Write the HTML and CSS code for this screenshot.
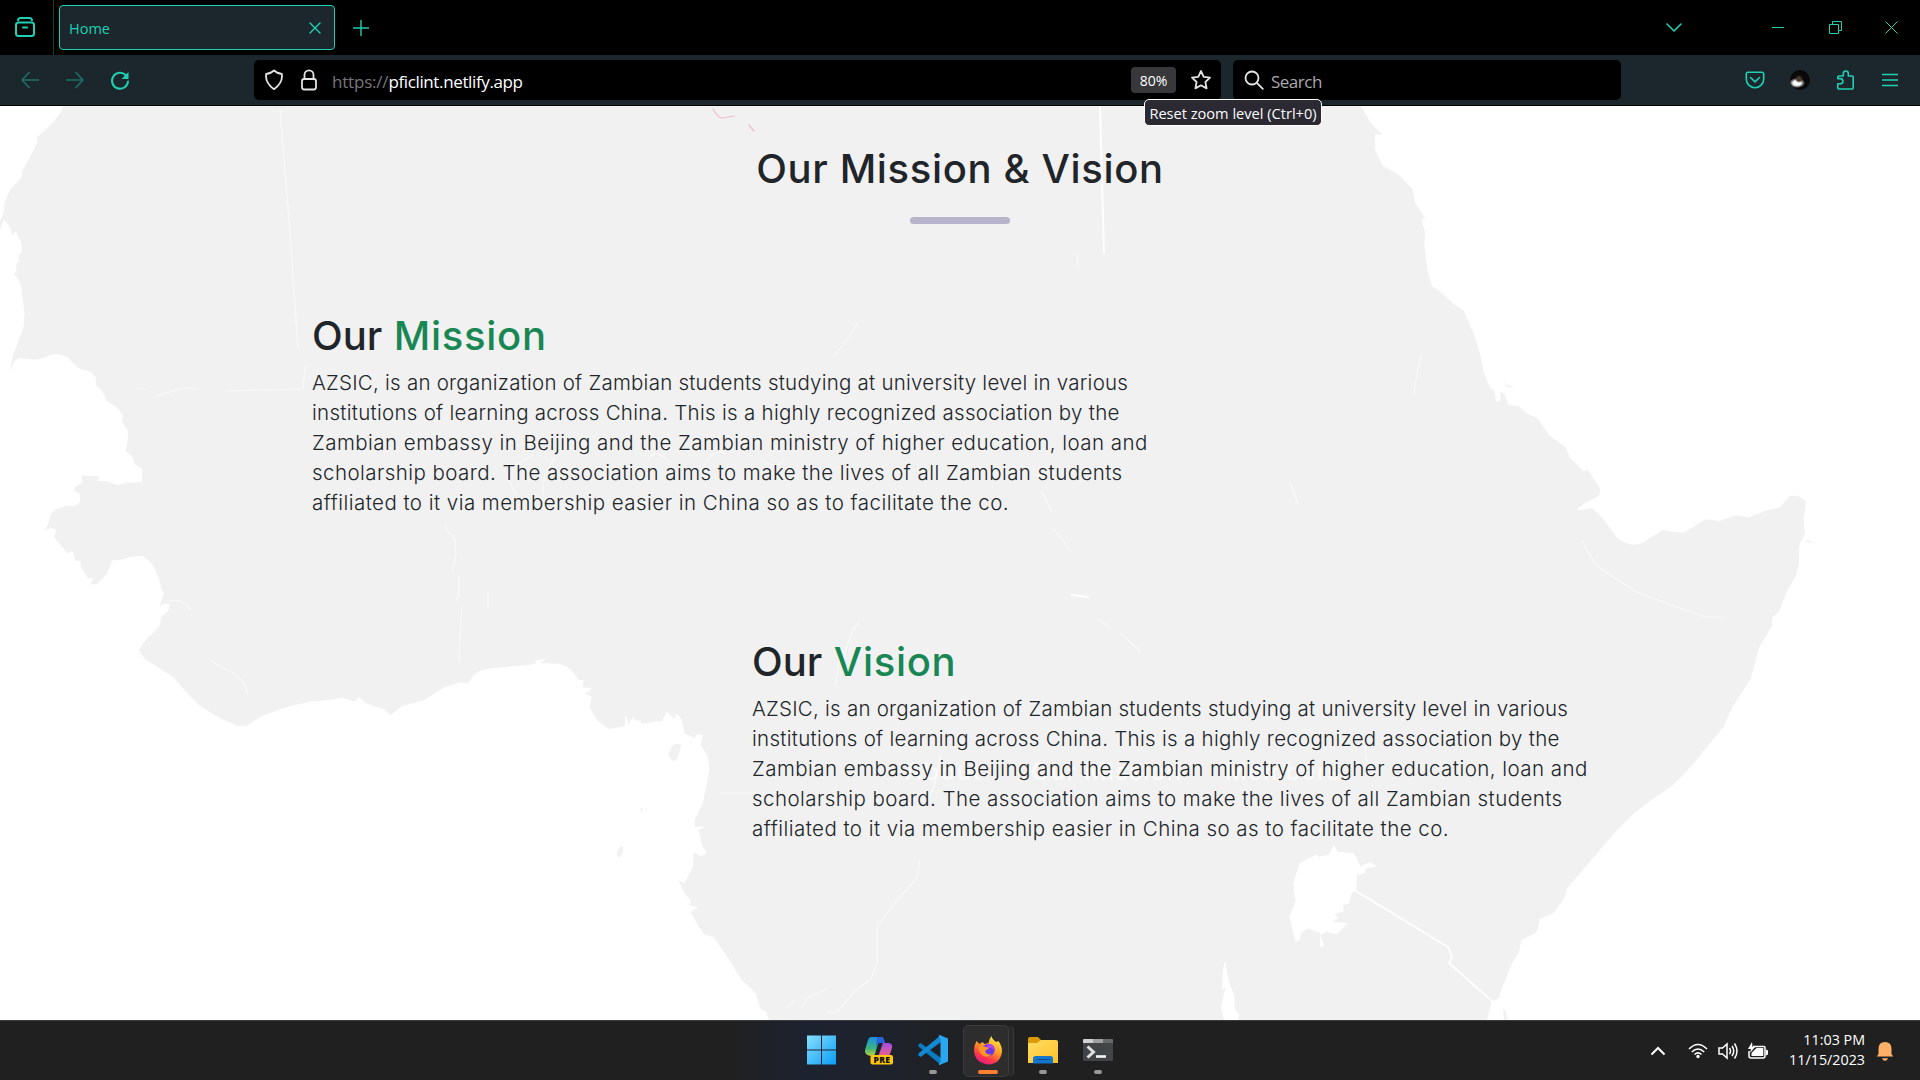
FILE: index.html
```html
<!DOCTYPE html>
<html lang="en">
<head>
<meta charset="utf-8">
<title>Home</title>
<link rel="stylesheet" href="styles.css">
</head>
<body>
<div class="screen">
  <header class="tabs">
    <div class="view"><svg width="20" height="20" viewBox="0 0 20 20"><path d="M3 3.2Q3.400 1 5.600 1h8.800Q16.600 1 17 3.200" /><rect x="1" y="5.500" width="18" height="13.500" rx="2.500"/><path d="M8 10.500h4"/></svg></div>
    <div class="tab"><span class="t-home">Home</span><svg width="12" height="12" viewBox="0 0 12 12"><path d="M1 1l10 10M11 1L1 11"/></svg></div>
    <svg class="plus" width="16" height="16" viewBox="0 0 16 16"><path d="M8 .5v15M.5 8h15"/></svg>
    <div class="window">
      <svg width="18" height="12" viewBox="0 0 18 12"><path d="M2 2l7 7 7-7"/></svg>
      <svg class="thin w1" width="13" height="13" viewBox="0 0 13 13"><path d="M0 6.500h12"/></svg>
      <svg class="thin w2" width="13" height="13" viewBox="0 0 13 13"><path d="M.5 3.500h9v9h-9zM3.500 3.500v-3h9v9h-3"/></svg>
      <svg class="thin w3" width="13" height="13" viewBox="0 0 13 13"><path d="M.5.5l12 12M12.500.5l-12 12"/></svg>
    </div>
  </header>
  <nav class="toolbar">
    <div class="nav">
      <svg class="dim" width="18" height="18" viewBox="0 0 18 18"><path d="M17.500 9H1M8 1.500L1 9l7 7.500"/></svg>
      <svg class="dim" width="18" height="18" viewBox="0 0 18 18"><path d="M.5 9H17M10 1.500L17 9l-7 7.500"/></svg>
      <svg class="reload" width="20" height="20" viewBox="0 0 20 20"><path d="M15.800 4.200A8 8 0 1 0 18 10.500"/><path class="fill" d="M18.500 1v7h-7z"/></svg>
    </div>
    <div class="url">
      <svg width="20" height="22" viewBox="0 0 20 22"><path d="M10 1.500Q12.500 4 17.800 5Q19.200 13.500 10 20.200Q.8 13.500 2.200 5Q7.500 4 10 1.500Z"/></svg>
      <svg class="lock" width="18" height="22" viewBox="0 0 18 22"><rect x="2" y="10" width="14" height="10.500" rx="2.200"/><path d="M4.500 10V5.800a4.500 4.500 0 0 1 9 0V10"/></svg>
      <span class="t-url"><span class="scheme">https://</span><span class="host">pficlint.netlify.app</span></span>
      <span class="chip">80%</span>
      <svg class="star" width="22" height="22" viewBox="0 0 22 22"><path d="M11 2l2.700 5.800 6.300.8-4.600 4.400 1.200 6.400L11 16.300l-5.600 3.100L6.600 13 2 8.600l6.300-.8z"/></svg>
    </div>
    <div class="search">
      <svg width="20" height="20" viewBox="0 0 20 20"><circle cx="8" cy="8" r="6.500"/><path d="M12.800 12.800l6 6"/></svg>
      <span class="t-search">Search</span>
    </div>
    <div class="tools">
      <svg width="20" height="18" viewBox="0 0 20 18"><path d="M3 1.200h14a1.700 1.700 0 0 1 1.700 1.700V8a8.700 8.700 0 0 1-17.400 0V2.900A1.700 1.700 0 0 1 3 1.200zM5.500 6.500L10 10.800l4.500-4.300"/></svg>
      <span class="orb"></span>
      <svg width="20" height="22" viewBox="0 0 20 22"><path d="M2.500 20Q1.800 20 1.800 19v-4.200h2.500a2.600 2.600 0 0 0 0-5.200H1.800V8Q1.800 7 2.800 7h4.500V4.500a2.500 2.500 0 0 1 5 0V7h3.900Q17.200 7 17.200 8v11Q17.200 20 16.200 20z"/></svg>
      <svg width="16" height="16" viewBox="0 0 16 16"><path d="M.5 2.500h15M.5 8h15M.5 13.500h15"/></svg>
    </div>
  </nav>
  <div class="tip">Reset zoom level (Ctrl+0)</div>

  <main class="page">
    <svg class="map" viewBox="0 106 1920 914" width="1920" height="914">
      <rect class="land" x="0" y="106" width="1920" height="914"/>
      <g class="sea">
        <path transform="translate(0 100) scale(.40816)" d="M-10 0L158 0 150 28 130 55 90 92 92 102 68 150 55 172 52 192 25 218 12 250 8 278-2 300-2 322 10 292 25 312 30 332 38 322 52 348 54 372 46 380 46 396 40 400 40 420 34 425 50 448 56 490 60 520 58 555 45 590 30 630 25 665Q35 635 48 632L80 636Q95 636 105 632L125 624Q145 620 165 630L185 650Q195 661 205 661L222 665 235 680 235 698 250 712 262 738 285 752 300 770 300 788 312 808 314 828 308 862 322 870 330 892 348 905 348 936 310 938 288 944 262 934 240 933 243 922 200 920 202 938 184 948 182 958 196 965 196 985 185 994 160 995 132 1005 122 1020 118 1040 108 1055 125 1048 138 1052 132 1072 142 1082 165 1110 178 1106 185 1128 198 1130 197 1142 215 1172 228 1172 222 1187 238 1186 262 1160 275 1128 300 1126Q325 1114 350 1118 375 1130 390 1175L395 1195 402 1210 390 1242Q400 1230 416 1235L412 1252 396 1265 390 1290 355 1325 340 1348 355 1370 385 1388 425 1415 460 1455 490 1485 540 1515 580 1533 605 1533 640 1510 680 1495 720 1482 765 1475 745 1473 790 1472 840 1465 870 1474 880 1462 895 1478 940 1492 958 1507 985 1485 1040 1470 1090 1438 1130 1426 1145 1430 1160 1410Q1175 1396 1200 1393L1290 1384 1312 1382 1312 1373 1338 1368 1322 1380Q1380 1378 1390 1390 1410 1402 1425 1440L1448 1448 1430 1454 1450 1462 1443 1495 1460 1525 1490 1543 1530 1535 1534 1510 1540 1530 1550 1515 1568 1525V2400H-10Z"/>
        <path transform="translate(560 600) scale(.40816 .33333)" d="M0 198L20 208 45 240 58 240 55 262 78 265 60 280 78 290 70 300 72 320 90 360 120 387 160 380 160 345 168 375 178 350 185 375 195 358 200 372 250 362 262 335 280 358 285 340 298 358 305 400 330 415 335 402 350 405 345 435 362 470 366 510 356 570 350 610 330 660 330 680 356 680 340 690 348 735 360 760 345 768 328 755 326 800 305 850 290 840 305 880 322 905 315 915 338 922 320 935 340 980 355 1005 375 1010 410 1070 445 1140 480 1180 490 1225 505 1235 512 1262H0Z"/>
        <path transform="translate(1280 100) scale(.40816 .35714)" d="M195 0L200 22 225 68 252 98 233 96 233 140 252 185 290 208 325 250 330 285 356 332 347 335 355 370 354 410 362 480 372 520 395 540 430 575 450 590 475 655 490 710 500 765 515 805 525 815 530 845 540 842 540 815 550 825 560 855 585 856 605 878 630 890 660 940 700 972 710 1002 745 1040 754 1034 785 1090 782 1108 745 1130 725 1150 765 1143 790 1170 825 1225Q865 1260 895 1235L938 1204Q960 1210 990 1211L1020 1190Q1045 1165 1072 1180L1118 1163 1150 1168 1190 1150 1225 1140 1250 1108 1270 1108 1289 1125 1283 1170 1286 1215 1272 1248 1271 1300 1265 1330 1240 1380 1222 1435 1207 1448 1205 1475 1175 1530 1165 1572H1600V0Z"/>
        <path transform="translate(1200 600) scale(.45918 .33333)" d="M1272 0L1262 35 1248 50 1245 85 1215 155 1200 235 1160 320 1140 380 1090 465Q1040 550 1010 575T945 640Q910 685 880 735L800 865 795 890 770 940 740 957 736 985 730 1000 700 1020 695 1055 680 1090 665 1140 650 1195 635 1205 625 1262H1568V0ZM292 735L300 755 335 760 350 800 372 785 384 800 362 805 358 820 342 825 340 870 330 880 325 910 312 915 312 935 292 942 302 955 288 965 322 970 298 1003 275 995 262 1005 270 1035 262 1042 262 1000 235 985 220 1000 216 1022 208 1025 195 950 208 905 203 850 217 790 255 762 257 770 280 765ZM55 1080L62 1140 75 1190 75 1225 86 1245 82 1262 52 1262 46 1220 56 1160 48 1170 50 1110Z"/>
      </g>
      <g class="land">
        <path d="M668 754l5-9q5-2 8-1-1 12-6 17-5 0-7-7zM617 855q1-9 6-9 1 7-4 12zM640 810l2-3v5zM1504 380l3 5 8 2h-8zM1805 542l3-2 5 3zM1503 1008q5 4 4 12h-3z"/>
      </g>
      <g class="borders">
        <path class="b1" d="M280 110L289 220 298 349M305 366L303 389 225 391M197 389L184 388 170 392 157 396M137 388l8 1M445 525l3 7 7 7 1 15-4 18M459 575v20l-3 5M462 607l-2 30-1 25M488 590v18M213 662l12 7q20 8 22 25M533 455l-9 6-14 5-2 12 8 17M169 601q14-3 22 9M555 455q-6 15-11 22l-1 18M835 355l17-22 6-10M648 459q10-12 22 5M700 470l10-13q7-7 15-4M762 459q13 12 22 1"/>
        <path class="b2" d="M1100 106L1104 253"/>
        <path class="b1" d="M1077 254l1 12M1053 528l18 23M1290 482l8 22M1042 492l10 20M844 658q7-30 15-35M835 685l5-30M720 793h60M940 755q-3 30-12 45M920 860l-3 18-22 25-18 24v36l-6 16-16 12-18 21h-10M787 1007l8-7M802 1007l7-10 17-8M1367 740q-6 15 7 33M1098 620l12 7M1120 633l20 18M1582 540q10 23 22 31t33 21l34 13 35 12h16M1421 355l-8 40"/>
        <path class="b2" d="M1356 891l92 56 4 10-3 6 43 38M1072 595l16 2"/>
        <path class="river" d="M713 109q5 9 9 9l12-2M749 125l5 6"/>
      </g>
      <g class="ghost"><text x="905" y="780" textLength="76">About</text><text x="1031" y="780" textLength="150">Our Mission</text><text x="1225" y="780" textLength="115">Members</text></g>
    </svg>
    <section class="content">
      <h1>Our Mission &amp; Vision</h1>
      <div class="rule"></div>
      <article class="mission">
        <h2>Our <span class="green">Mission</span></h2>
        <p><span class="l1">AZSIC, is an organization of Zambian students studying at university level in various</span><br>
        <span class="l2">institutions of learning across China. This is a highly recognized association by the</span><br>
        <span class="l3">Zambian embassy in Beijing and the Zambian ministry of higher education, loan and</span><br>
        <span class="l4">scholarship board. The association aims to make the lives of all Zambian students</span><br>
        <span class="l5">affiliated to it via membership easier in China so as to facilitate the co.</span></p>
      </article>
      <article class="vision">
        <h2>Our <span class="green">Vision</span></h2>
        <p><span class="l1">AZSIC, is an organization of Zambian students studying at university level in various</span><br>
        <span class="l2">institutions of learning across China. This is a highly recognized association by the</span><br>
        <span class="l3">Zambian embassy in Beijing and the Zambian ministry of higher education, loan and</span><br>
        <span class="l4">scholarship board. The association aims to make the lives of all Zambian students</span><br>
        <span class="l5">affiliated to it via membership easier in China so as to facilitate the co.</span></p>
      </article>
    </section>
  </main>

  <footer class="taskbar">
    <div class="apps">
      <div class="app start"><svg width="30" height="30" viewBox="0 0 30 30"><defs><linearGradient id="win" x1="0" y1="0" x2="1" y2="1"><stop offset="0" stop-color="#86e0ff"/><stop offset="1" stop-color="#0a9cf5"/></linearGradient></defs><path fill="url(#win)" d="M1 .5h14v14H1zM16 .5h14v14H16zM1 15.500h14v14H1zM16 15.500h14v14H16z"/></svg></div>
      <div class="app"><svg width="30" height="30" viewBox="0 0 30 30"><defs><linearGradient id="c1" x1="0" y1="0" x2="0" y2="1"><stop offset="0" stop-color="#1c8fe0"/><stop offset=".6" stop-color="#3ab57e"/><stop offset="1" stop-color="#c3cf3c"/></linearGradient><linearGradient id="c2" x1="0" y1="0" x2="0" y2="1"><stop offset="0" stop-color="#a44be8"/><stop offset="1" stop-color="#f5637c"/></linearGradient></defs><path fill="url(#c1)" d="M8 2h10q3 0 2 3l-4 0-4 14q-1 2-4 2-7-1-6-6L5 5q1-3 3-3z"/><path fill="#2763dd" d="M14 2h4q3 0 4 6h-5q-3 0-4 4z"/><path fill="url(#c2)" d="M20 8h6q4 1 3 5l-3 9H15z"/><rect x="7.500" y="20" width="22.500" height="9.500" rx="2" fill="#ffc611"/><text x="10.500" y="27.800" class="pre" textLength="16.500">PRE</text></svg></div>
      <div class="app"><svg width="30" height="30" viewBox="0 0 30 30"><path fill="#0b7bc4" d="M0 10l2.500-2L23 23v7L1 12z"/><path fill="#1489d3" d="M0 20l2.500 2L23 7V0L1 18z"/><path fill="#2aa5f0" d="M21.500 0L30 3.500v23L21.500 30l-1-1 2-2V4l-2-3z"/></svg><i class="dot"></i></div>
      <div class="app active"><svg width="30" height="30" viewBox="0 0 30 30"><defs><linearGradient id="ff" x1=".8" y1="0" x2=".3" y2="1"><stop offset="0" stop-color="#fff04a"/><stop offset=".45" stop-color="#ff9a24"/><stop offset=".75" stop-color="#ff3a47"/><stop offset="1" stop-color="#e3168b"/></linearGradient></defs><path fill="url(#ff)" d="M3.500 6l3 3 3-2 2 2 4-1Q16 4 18.500 1q1 4 5 6l2-1q4 6 3.500 11Q27 29 15.500 29.500 2 28 1 16 1 10 3.500 6z"/><circle cx="15.500" cy="15" r="6.200" fill="#6a3be4"/><path fill="#b443e8" d="M14 9q8 0 8 7-3-4-8-3z"/><path fill="#ff9428" d="M5 12q5-2 11 1l-4 3q2 5 7 3-5 5-10 1-3-3-4-8z"/></svg><i class="dot"></i></div>
      <div class="app"><svg width="30" height="30" viewBox="0 0 30 30"><defs><linearGradient id="fo" x1="0" y1="0" x2="1" y2="1"><stop offset="0" stop-color="#ffdd64"/><stop offset="1" stop-color="#ffc02b"/></linearGradient></defs><path fill="#dc9a06" d="M0 4q0-2 2-2h8l3 3v6H0z"/><path fill="url(#fo)" d="M0 8h9l4-3h15q2 0 2 2v21H0z"/><path fill="#1477cc" d="M5 28.500v-5q0-2.500 2.500-2.500h15q2.500 0 2.500 2.500v5z"/><path stroke="#0a4b93" d="M9 24.500h13"/></svg><i class="dot"></i></div>
      <div class="app"><svg width="30" height="30" viewBox="0 0 30 30"><rect y="4" width="30" height="22" rx="1.500" fill="#424447"/><path fill="#d0d0d0" d="M0 8V5q0-1 1-1h9v4z"/><path fill="#a0a0a0" d="M10 4h10v4H10z"/><path fill="#69696b" d="M20 4h9q1 0 1 1v3H20z"/><path fill="none" stroke="#e0e0e0" stroke-width="3" d="M4.500 11.500l6 5.500-6 5.500"/><path stroke="#f5f5f5" stroke-width="2.600" d="M13 21.500h10"/></svg><i class="dot"></i></div>
    </div>
    <div class="tray">
      <svg class="up" width="16" height="10" viewBox="0 0 16 10"><path d="M1.500 8.500L8 2l6.500 6.500"/></svg>
      <svg width="20" height="16" viewBox="0 0 20 16"><path d="M1 6q9-9 18 0M3.800 9q6.200-6 12.400 0M6.500 11.500q3.500-3.200 7 0"/><circle class="solid" cx="10" cy="13.500" r="1.700"/></svg>
      <svg width="20" height="18" viewBox="0 0 20 18"><path d="M1 6h3.500L9 2v14l-4.500-4H1zM11.500 6q2 3 0 6M14 4q3.500 5 0 10M16.500 1.500q5 7.500 0 15"/></svg>
      <svg width="20" height="18" viewBox="0 0 20 18"><path d="M5 4.500h11q1 0 1 1V14q0 2-2 2H3q-2 0-2-2V9"/><path class="solid" d="M4 0L0 7h3l-1 4 5-6H4.500zM18 7.500l2 1v4l-2 1zM3.500 11l5-5h6.800v8H3.500z"/></svg>
      <div class="clock"><span>11:03 PM</span><span>11/15/2023</span></div>
      <svg class="bell" width="18" height="20" viewBox="0 0 18 20"><path d="M2.500 8q0-7 6.500-7t6.500 7v5l1.700 2.500H.8L2.500 13zM6 17.200h6q-.8 2.500-3 2.500t-3-2.500z"/></svg>
    </div>
  </footer>
</div>
</body>
</html>
```
FILE: styles.css
```css
* { box-sizing: border-box; }
body { margin: 0; font-family: "Open Sans", "Noto Sans", sans-serif; }
.screen { width: 1920px; height: 1080px; overflow: hidden; display: flex; flex-direction: column; position: relative; }
svg { display: block; flex: none; }

/* Browser tab strip */
.tabs { height: 55px; flex: none; background: #000; display: flex; align-items: center; }
.tabs svg, .nav svg, .tools svg { fill: none; stroke: #20d0b2; stroke-width: 1.6; stroke-linecap: round; stroke-linejoin: round; }
.view { width: 54px; height: 55px; border-right: 1px solid #0c4038; padding: 17px 0 0 15px; }
.tabs .view svg { stroke-width: 2; }
.tab { margin-left: 5px; width: 276px; height: 45px; border: 1px solid #20d0b2; border-radius: 4px; background: #1c272d; padding: 0 13px 0 9px; display: flex; align-items: center; justify-content: space-between; color: #20d0b2; font-size: 14.500px; }
.t-home { padding-top: 1px; }
.tabs .tab svg, .tabs .plus { stroke-width: 1.4; }
.plus { margin-left: 18px; }
.window { margin-left: auto; display: flex; align-items: center; padding-right: 22px; }
.tabs .thin { stroke-width: 1; stroke-linecap: butt; stroke-linejoin: miter; }
.w1 { margin-left: 89px; }
.w2 { margin-left: 44px; }
.w3 { margin-left: 43px; }

/* Address bar row */
.toolbar { height: 51px; flex: none; background: #1c272d; border-bottom: 1px solid #000; display: flex; padding-top: 5px; }
.nav { width: 254px; height: 40px; display: flex; align-items: center; gap: 27px; padding-left: 21px; }
.nav .dim { stroke: #1e6f66; }
.nav .reload { stroke-width: 2; margin: 2px 0 0 -1px; }
.nav .reload .fill { fill: #20d0b2; stroke: none; }
.url, .search { height: 40px; background: #000; border-radius: 5px; display: flex; align-items: center; color: #fff; font-size: 17px; }
.url svg, .search svg { fill: none; stroke: #e4e4e6; stroke-width: 1.8; stroke-linejoin: round; stroke-linecap: round; }
.url { width: 967px; padding: 0 9px 0 10px; }
.lock { margin-left: 16px; }
.t-url { margin-left: 14px; flex: 1; padding-top: 3px; }
.scheme { color: #77777c; letter-spacing: -.2px; }
.host { letter-spacing: -.37px; }
.chip { width: 45px; height: 26px; border-radius: 4px; background: #38383b; font-size: 14px; display: flex; align-items: center; justify-content: center; }
.star { margin-left: 14px; }
.search { width: 388px; margin-left: 12px; padding-left: 11px; }
.t-search { margin-left: 7px; padding-top: 3px; color: #a9a9ab; letter-spacing: -.5px; }
.tools { margin-left: auto; height: 40px; display: flex; align-items: center; padding-right: 22px; }
.orb { width: 20px; height: 20px; border-radius: 50%; margin: 0 26px 0 25px; background: radial-gradient(circle at 9px 9px, #47372d 0 2px, transparent 4px), radial-gradient(ellipse 8px 5px at 7px 13px, #fff 45%, #777 75%, transparent), #0a0909; }
.tools svg:last-child { margin-left: 26px; }
.tip { position: absolute; left: 1144px; top: 99px; width: 178px; height: 27px; padding-top: 1px; border: 1px solid #fff; border-radius: 5px; background: #2b2a33; color: #fbfbfe; font-size: 14.600px; display: flex; align-items: center; justify-content: center; white-space: nowrap; z-index: 3; }

/* Page with the map behind the text */
.page { height: 914px; flex: none; display: grid; background: #fff; }
.map, .content { grid-area: 1 / 1; }
.land { fill: #f1f1f1; }
.sea { fill: #fff; }
.borders { fill: none; stroke: #fff; stroke-linecap: round; stroke-linejoin: round; }
.b1 { stroke-width: 1.2; opacity: .6; }
.b2 { stroke-width: 2; opacity: .9; }
.river { stroke: #e8a9b5; stroke-width: 1.2; opacity: .7; }
.ghost { fill: #fff; opacity: .7; font: 500 24px Inter, sans-serif; }
.content { font-family: Inter, sans-serif; color: #212529; z-index: 1; }
h1, h2 { font-weight: 500; font-size: 40px; line-height: 48px; margin: 0; white-space: nowrap; }
h1 { text-align: center; padding-top: 39px; letter-spacing: .65px; }
.rule { width: 100px; height: 7px; border-radius: 4px; background: #b6b3ca; margin: 24px auto 0; }
article { width: 860px; }
.mission { margin: 88px 0 0 312px; }
.vision { margin: 120px 0 0 752px; }
.green { color: #198754; letter-spacing: .7px; margin-left: 1px; }
p { margin: 8px 0 0; font-size: 20.500px; font-weight: 300; line-height: 30px; white-space: nowrap; }
.l1 { letter-spacing: .24px; }
.l2 { letter-spacing: .285px; }
.l3 { letter-spacing: .47px; }
.l4 { letter-spacing: .44px; }
.l5 { letter-spacing: .465px; }

/* Desktop taskbar */
.taskbar { height: 60px; flex: none; border-top: 1px solid #3c3c3c; background: linear-gradient(90deg, #202020 38%, #1d2230 42%, #1e222b 46%, #202020 52%); display: flex; }
.apps { display: flex; padding-left: 796px; }
.app { width: 55px; height: 59px; position: relative; padding: 14px 0 0 12px; }
.start { padding-left: 10px; }
.pre { font: 800 8.500px "Open Sans", sans-serif; fill: #111; }
.dot { position: absolute; left: 23px; top: 49px; width: 8px; height: 4px; border-radius: 2px; background: #979797; }
.active::before { content: ""; position: absolute; left: 2px; top: 4px; width: 44px; height: 50px; border-radius: 5px; border: 1px solid #3b3b3b; background: #2d2d2d; box-shadow: 5px 0 0 -1px #292929, 6px 0 0 -1px #383838; }
.active svg { position: relative; }
.active .dot { left: 17px; width: 20px; background: #ff7f33; }
.tray { margin-left: auto; display: flex; align-items: center; padding-right: 26px; color: #fff; }
.tray svg { fill: none; stroke: #fff; stroke-width: 1.5; margin-right: 10px; }
.tray .up { stroke-width: 2; margin-right: 22px; }
.tray .solid { fill: #fff; stroke: none; }
.clock { width: 87px; display: flex; flex-direction: column; align-items: flex-end; font-size: 14.300px; line-height: 20px; padding-bottom: 2px; white-space: nowrap; }
.tray .bell { fill: #ffb067; stroke: none; margin: 0 0 0 11px; }
```
